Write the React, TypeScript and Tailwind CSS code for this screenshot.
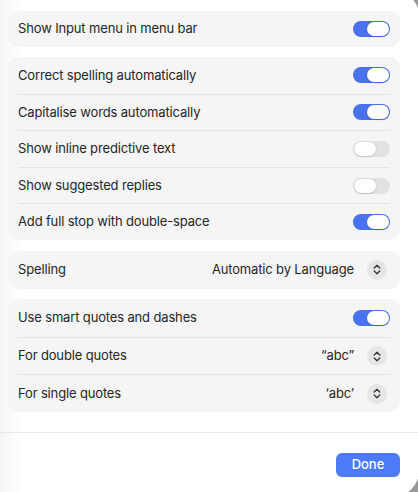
import React from "react";

const font = { fontFamily: 'Inter, "Noto Sans", "Liberation Sans", sans-serif' };

const Toggle = ({ on }: { on: boolean }) => (
  <div
    className={`relative w-[37px] h-[16px] rounded-full ${
      on ? "bg-[#4a72ee]" : "bg-[#e2e2e2]"
    }`}
  >
    <div
      className={`absolute top-[1px] h-[14px] w-[22px] rounded-full bg-white shadow-[0_0.5px_1.5px_rgba(0,0,0,0.25)] ${
        on ? "right-[1px]" : "left-[1px]"
      }`}
    />
  </div>
);

const Stepper = () => (
  <div className="w-[20px] h-[20px] rounded-full bg-[#e6e6e6] flex items-center justify-center">
    <svg width="8" height="11" viewBox="0 0 8 11" fill="none">
      <path
        d="M1.2 4 L4 1.3 L6.8 4 M1.2 7 L4 9.7 L6.8 7"
        stroke="#333"
        strokeWidth="1.3"
        strokeLinecap="round"
        strokeLinejoin="round"
      />
    </svg>
  </div>
);

type Row =
  | { label: string; toggle: boolean }
  | { label: string; value: string };

const Card = ({
  rows,
  rowH,
  className = "",
}: {
  rows: Row[];
  rowH: string;
  className?: string;
}) => (
  <div className={`bg-[#f5f5f5] rounded-[10px] px-[10px] ${className}`}>
    {rows.map((r, i) => (
      <div
        key={r.label}
        className={`flex items-center justify-between ${rowH} ${
          i > 0 ? "border-t border-[#e4e4e4]" : ""
        }`}
      >
        <span className="text-[13px] tracking-[-0.15px] text-[#262626]">
          {r.label}
        </span>
        {"toggle" in r ? (
          <Toggle on={r.toggle} />
        ) : (
          <div className="flex items-center gap-[13px] pr-[3px]">
            <span className="text-[13px] tracking-[-0.15px] text-[#262626]">
              {r.value}
            </span>
            <Stepper />
          </div>
        )}
      </div>
    ))}
  </div>
);

export default function App() {
  return (
    <div className="w-[418px] h-[492px] overflow-hidden bg-[#999999]" style={font}>
      {/* sheet window, its right corners run just past the viewport */}
      <div className="-mt-[11px] w-[420px] h-[509px] rounded-r-[30px] bg-[linear-gradient(to_right,#f6f6f6,#ffffff_22px)] flex flex-col">
        <div className="pt-[22px] pl-[8px] pr-[20px] flex flex-col">
          <Card
            rowH="h-[36px]"
            rows={[{ label: "Show Input menu in menu bar", toggle: true }]}
          />
          <Card
            className="mt-[10px]"
            rowH="h-[36.6px]"
            rows={[
              { label: "Correct spelling automatically", toggle: true },
              { label: "Capitalise words automatically", toggle: true },
              { label: "Show inline predictive text", toggle: false },
              { label: "Show suggested replies", toggle: false },
              { label: "Add full stop with double-space", toggle: true },
            ]}
          />
          <Card
            className="mt-[11px]"
            rowH="h-[38px]"
            rows={[{ label: "Spelling", value: "Automatic by Language" }]}
          />
          <Card
            className="mt-[10px]"
            rowH="h-[37.7px]"
            rows={[
              { label: "Use smart quotes and dashes", toggle: true },
              { label: "For double quotes", value: "\u201Cabc\u201D" },
              { label: "For single quotes", value: "\u2018abc\u2019" },
            ]}
          />
        </div>
        <div className="mt-[20px] border-t border-[#e8e8e8]" />
        <div className="flex justify-end pr-[20px] pt-[20px]">
          <button className="w-[64px] h-[24px] rounded-[6px] bg-[#4d7bf7] text-white text-[13px] font-medium">
            Done
          </button>
        </div>
      </div>
    </div>
  );
}
